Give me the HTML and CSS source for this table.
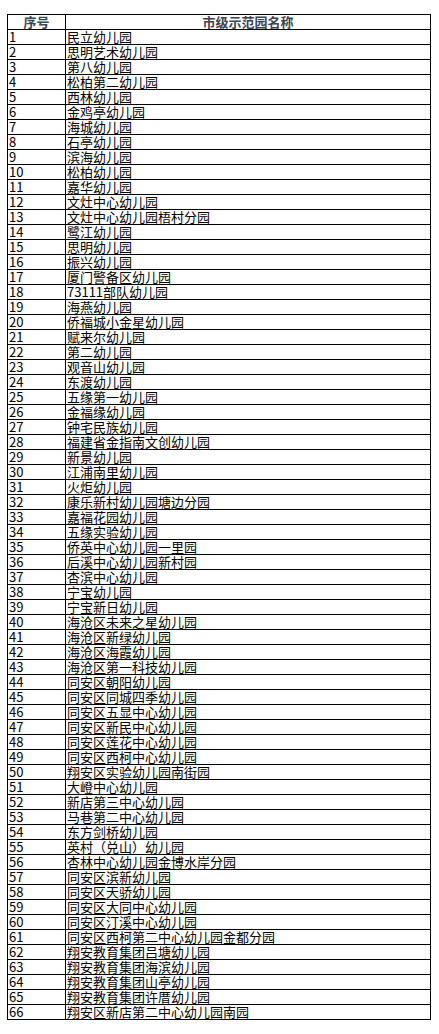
FILE: index.html
```html
<!DOCTYPE html>
<html lang="zh-CN">
<head>
<meta charset="utf-8">
<title>市级示范园名称</title>
<link rel="stylesheet" href="styles.css">
</head>
<body>
<table class="list">
<thead>
<tr><th class="c-no">序号</th><th class="c-name">市级示范园名称</th></tr>
</thead>
<tbody>
<tr><td>1</td><td>民立幼儿园</td></tr>
<tr><td>2</td><td>思明艺术幼儿园</td></tr>
<tr><td>3</td><td>第八幼儿园</td></tr>
<tr><td>4</td><td>松柏第二幼儿园</td></tr>
<tr><td>5</td><td>西林幼儿园</td></tr>
<tr><td>6</td><td>金鸡亭幼儿园</td></tr>
<tr><td>7</td><td>海城幼儿园</td></tr>
<tr><td>8</td><td>石亭幼儿园</td></tr>
<tr><td>9</td><td>滨海幼儿园</td></tr>
<tr><td>10</td><td>松柏幼儿园</td></tr>
<tr><td>11</td><td>嘉华幼儿园</td></tr>
<tr><td>12</td><td>文灶中心幼儿园</td></tr>
<tr><td>13</td><td>文灶中心幼儿园梧村分园</td></tr>
<tr><td>14</td><td>鹭江幼儿园</td></tr>
<tr><td>15</td><td>思明幼儿园</td></tr>
<tr><td>16</td><td>振兴幼儿园</td></tr>
<tr><td>17</td><td>厦门警备区幼儿园</td></tr>
<tr><td>18</td><td>73111部队幼儿园</td></tr>
<tr><td>19</td><td>海燕幼儿园</td></tr>
<tr><td>20</td><td>侨福城小金星幼儿园</td></tr>
<tr><td>21</td><td>赋来尔幼儿园</td></tr>
<tr><td>22</td><td>第二幼儿园</td></tr>
<tr><td>23</td><td>观音山幼儿园</td></tr>
<tr><td>24</td><td>东渡幼儿园</td></tr>
<tr><td>25</td><td>五缘第一幼儿园</td></tr>
<tr><td>26</td><td>金福缘幼儿园</td></tr>
<tr><td>27</td><td>钟宅民族幼儿园</td></tr>
<tr><td>28</td><td>福建省金指南文创幼儿园</td></tr>
<tr><td>29</td><td>新景幼儿园</td></tr>
<tr><td>30</td><td>江浦南里幼儿园</td></tr>
<tr><td>31</td><td>火炬幼儿园</td></tr>
<tr><td>32</td><td>康乐新村幼儿园塘边分园</td></tr>
<tr><td>33</td><td>嘉福花园幼儿园</td></tr>
<tr><td>34</td><td>五缘实验幼儿园</td></tr>
<tr><td>35</td><td>侨英中心幼儿园一里园</td></tr>
<tr><td>36</td><td>后溪中心幼儿园新村园</td></tr>
<tr><td>37</td><td>杏滨中心幼儿园</td></tr>
<tr><td>38</td><td>宁宝幼儿园</td></tr>
<tr><td>39</td><td>宁宝新日幼儿园</td></tr>
<tr><td>40</td><td>海沧区未来之星幼儿园</td></tr>
<tr><td>41</td><td>海沧区新绿幼儿园</td></tr>
<tr><td>42</td><td>海沧区海霞幼儿园</td></tr>
<tr><td>43</td><td>海沧区第一科技幼儿园</td></tr>
<tr><td>44</td><td>同安区朝阳幼儿园</td></tr>
<tr><td>45</td><td>同安区同城四季幼儿园</td></tr>
<tr><td>46</td><td>同安区五显中心幼儿园</td></tr>
<tr><td>47</td><td>同安区新民中心幼儿园</td></tr>
<tr><td>48</td><td>同安区莲花中心幼儿园</td></tr>
<tr><td>49</td><td>同安区西柯中心幼儿园</td></tr>
<tr><td>50</td><td>翔安区实验幼儿园南街园</td></tr>
<tr><td>51</td><td>大嶝中心幼儿园</td></tr>
<tr><td>52</td><td>新店第三中心幼儿园</td></tr>
<tr><td>53</td><td>马巷第二中心幼儿园</td></tr>
<tr><td>54</td><td>东方剑桥幼儿园</td></tr>
<tr><td>55</td><td>英村（兑山）幼儿园</td></tr>
<tr><td>56</td><td>杏林中心幼儿园金博水岸分园</td></tr>
<tr><td>57</td><td>同安区滨新幼儿园</td></tr>
<tr><td>58</td><td>同安区天骄幼儿园</td></tr>
<tr><td>59</td><td>同安区大同中心幼儿园</td></tr>
<tr><td>60</td><td>同安区汀溪中心幼儿园</td></tr>
<tr><td>61</td><td>同安区西柯第二中心幼儿园金都分园</td></tr>
<tr><td>62</td><td>翔安教育集团吕塘幼儿园</td></tr>
<tr><td>63</td><td>翔安教育集团海滨幼儿园</td></tr>
<tr><td>64</td><td>翔安教育集团山亭幼儿园</td></tr>
<tr><td>65</td><td>翔安教育集团许厝幼儿园</td></tr>
<tr><td>66</td><td>翔安区新店第二中心幼儿园南园</td></tr>
</tbody>
</table>
</body>
</html>
```

FILE: styles.css
```css
html, body {
  margin: 0;
  padding: 0;
  background: #ffffff;
}

body {
  padding: 14px 0 0 7px;
  font-family: "Noto Sans CJK SC", "Liberation Sans", sans-serif;
}

.list {
  border-collapse: collapse;
  width: 424px;
  table-layout: fixed;
}

.list th,
.list td {
  border: 1px solid #000000;
  height: 14px;
  padding: 0 1px;
  box-sizing: border-box;
  font-size: 13px;
  line-height: 14px;
  white-space: nowrap;
  vertical-align: middle;
}

.list td {
  color: #000000;
  text-align: left;
  font-weight: normal;
}

.list th {
  color: #3d4452;
  font-weight: bold;
  text-align: center;
}

.c-no {
  width: 58px;
}
```
